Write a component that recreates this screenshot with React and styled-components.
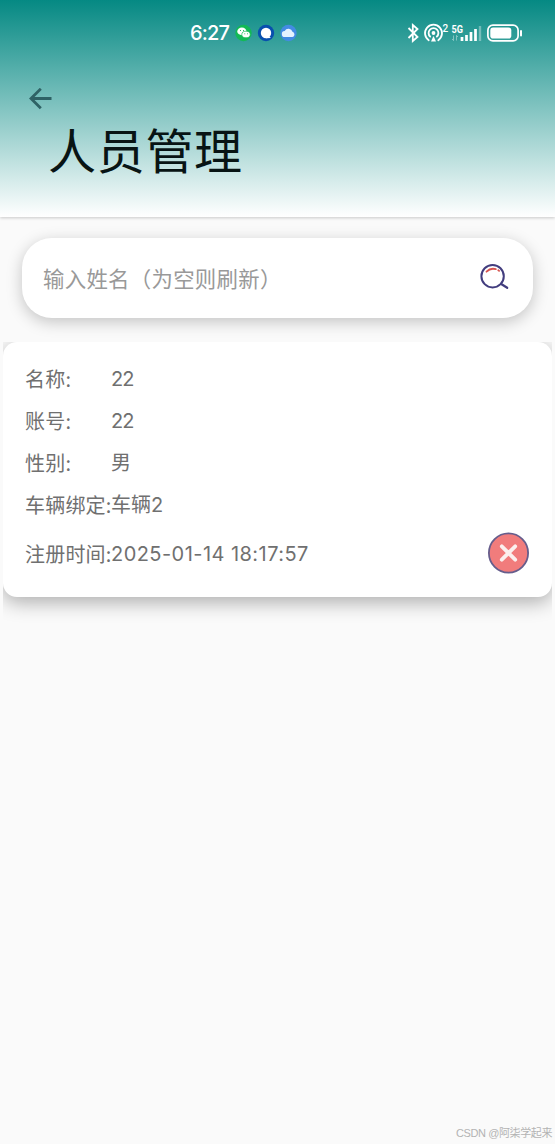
import React from 'react';
import styled, { createGlobalStyle } from 'styled-components';

const GlobalStyle = createGlobalStyle`
* {
  box-sizing: border-box;
}
body {
  margin: 0;
  background: #fafafa;
  font-family: 'Noto Sans CJK SC', sans-serif;
}
`;
const Container = styled.div`
display: flex;
flex-flow: column;
width: 100%;
height: 1144px;
overflow: hidden;
background: #fafafa;
`;
const Header = styled.header`
display: flex;
flex-flow: column;
flex: none;
height: 217px;
background: linear-gradient(to bottom, #058983, #ffffff);
box-shadow: 0 1px 3px rgba(0, 0, 0, .2);
`;
const StatusBar = styled.div`
display: flex;
align-items: center;
justify-content: space-between;
height: 66px;
padding: 0 32px 0 190px;
color: white;
`;
const StatusGroup = styled.div`
display: flex;
align-items: center;
`;
const Time = styled.span`
width: 45px;
font-family: Inter, sans-serif;
font-size: 20px;
font-weight: 500;
letter-spacing: -.8px;
line-height: 24px;
`;
const AppIcons = styled.svg`
width: 64px;
height: 18px;
`;
const SignalIcons = styled.svg`
width: 118px;
height: 24px;
font-family: Roboto, sans-serif;
`;
const BackButton = styled.button`
display: flex;
align-items: center;
justify-content: center;
width: 36px;
height: 36px;
margin: 16px 0 0 22px;
padding: 0;
border: 0;
background: none;
`;
const Title = styled.h1`
margin: -3px 0 0 48px;
font-size: 48px;
font-weight: 400;
line-height: 66px;
letter-spacing: .7px;
color: #081414;
`;
const SearchBar = styled.div`
display: flex;
flex: none;
align-items: center;
justify-content: space-between;
height: 80px;
margin: 21px 22px 0;
padding: 0 23px 0 21px;
border-radius: 30px;
background: white;
box-shadow: 0 4px 16px rgba(0, 0, 0, .22);
`;
const SearchInput = styled.input`
flex: 1;
min-width: 0;
padding: 0 0 2px;
border: 0;
outline: 0;
background: none;
font-family: inherit;
font-size: 21.4px;
font-weight: 400;
letter-spacing: .3px;
color: #666;
&::placeholder {
  color: #999;
  opacity: 1;
}
`;
const List = styled.div`
flex: 1;
margin: 24px 3px 0;
overflow: hidden;
`;
const Card = styled.div`
display: flex;
flex-flow: column;
height: 255px;
padding: 15px 23px 0 22px;
border-radius: 14px;
background: white;
box-shadow: 0 5px 20px rgba(0, 0, 0, .32);
`;
const Row = styled.div`
display: flex;
align-items: center;
height: ${props => props.$tall ? '56px' : '42px'};
font-size: 20px;
font-weight: 400;
line-height: 28px;
white-space: nowrap;
color: #707070;
`;
const Label = styled.span`
width: 86px;
padding-top: 1px;
letter-spacing: .2px;
`;
const Value = styled.span`
flex: 1;
padding-top: 2px;
font-family: Inter, 'Noto Sans CJK SC', sans-serif;
letter-spacing: ${props => props.$spacing || 0};
`;
const DeleteButton = styled.button`
display: flex;
padding: 0;
border: 0;
background: none;
`;
const Watermark = styled.footer`
align-self: flex-end;
height: 20px;
padding-right: 3px;
font-family: 'Liberation Sans', 'Noto Sans CJK SC', sans-serif;
font-size: 11px;
letter-spacing: -.4px;
line-height: 18px;
white-space: nowrap;
color: #b3b3b3;
`;

const fields = [
    { label: '名称:', value: '22', spacing: '-1px' },
    { label: '账号:', value: '22', spacing: '-1px' },
    { label: '性别:', value: '男' },
    { label: '车辆绑定:', value: '车辆2' },
];

const App = () => (<Container>
    <GlobalStyle />
    <Header>
        <StatusBar>
            <StatusGroup>
                <Time>6:27</Time>
                <AppIcons viewBox="0 0 64 18">
                    <circle cx="8.5" cy="9" r="8.2" fill="#12b955" />
                    <ellipse cx="6.9" cy="7.4" rx="4.6" ry="3.8" fill="#fff" />
                    <ellipse cx="11" cy="10.5" rx="4.2" ry="3.3" fill="#fff" stroke="#12b955" strokeWidth=".7" />
                    <path d="M5 6.5h.9M8 6.5h.9M9.4 9.8h.8M12 9.8h.8" stroke="#12b955" strokeWidth="1" />
                    <circle cx="31" cy="9" r="8.2" fill="#084fae" />
                    <circle cx="31" cy="9" r="5.2" fill="#fff" />
                    <path d="M32 11l4 3-5 .3z" fill="#fff" />
                    <circle cx="53.5" cy="9" r="8.2" fill="#438be2" />
                    <path d="M50 13a3 3 0 0 1-.3-6 4.2 4.2 0 0 1 7.8.8A2.7 2.7 0 0 1 57.5 13z" fill="#e5f2ff" />
                </AppIcons>
            </StatusGroup>
            <SignalIcons viewBox="0 0 118 24" fill="none" stroke="#fff">
                <path d="M3.5 7l9 9-4.7 4V4l4.7 4-9 9" strokeWidth="1.8" />
                <path d="M23.7 19.2a8.5 8.5 0 1 1 9.6 0M25.2 15.6a4.9 4.9 0 1 1 6.6 0" strokeWidth="1.8" strokeLinecap="round" />
                <circle cx="28.5" cy="12" r="1.9" fill="#fff" stroke="none" />
                <path d="M28.5 15l-2.5 5.5h5z" fill="#fff" stroke="none" />
                <text x="37.6" y="11" fontSize="10" fontWeight="500" fill="#fff" stroke="none">2</text>
                <text x="46.5" y="11.6" fontSize="10.5" fontWeight="700" textLength="11.5" lengthAdjust="spacingAndGlyphs" fill="#fff" stroke="none">5G</text>
                <path d="M48.5 14.5v5M48.5 19.5L47 18M51.5 19.5v-5M51.5 14.5l1.5 1.5" opacity=".4" />
                <path d="M57 20v-4M61.5 20v-6M66 20V11M70.5 20V8" strokeWidth="2.7" />
                <path d="M75 20V5" strokeWidth="2.4" opacity=".35" />
                <rect x="82.9" y="4.2" width="30.2" height="15.7" rx="5" strokeWidth="1.7" />
                <rect x="85.3" y="6.6" width="21" height="11" rx="2.8" fill="#fff" stroke="none" />
                <path d="M116 10v4.5" strokeWidth="2" strokeLinecap="round" />
            </SignalIcons>
        </StatusBar>
        <BackButton aria-label="返回">
            <svg width="24" height="24" viewBox="0 0 24 24" fill="none" stroke="#2e6265" strokeWidth="2.8">
                <path d="M23.5 10.5H3M12.8.8L3 10.5l9.8 9.8" />
            </svg>
        </BackButton>
        <Title>人员管理</Title>
    </Header>

    <SearchBar>
        <SearchInput placeholder="输入姓名（为空则刷新）" />
        <svg width="32" height="28" viewBox="0 0 32 28" fill="none" strokeLinecap="round">
            <circle cx="14.6" cy="12.2" r="11.2" stroke="#423d7e" strokeWidth="2" />
            <path d="M23.2 20l6 3.8" stroke="#423d7e" strokeWidth="2.2" />
            <path d="M8.5 7.7q4-4.1 9.3-2.5M20.3 6.3l.8.6" stroke="#d8544e" strokeWidth="1.8" />
        </svg>
    </SearchBar>

    <List>
        <Card>
            {fields.map(field => (
                <Row key={field.label}>
                    <Label>{field.label}</Label>
                    <Value $spacing={field.spacing}>{field.value}</Value>
                </Row>
            ))}
            <Row $tall>
                <Label>注册时间:</Label>
                <Value $spacing=".45px">2025-01-14 18:17:57</Value>
                <DeleteButton aria-label="删除">
                    <svg width="42" height="42" viewBox="0 0 42 42">
                        <circle cx="21.5" cy="21" r="19.6" fill="#f17c7c" stroke="#665d8c" strokeWidth="1.8" />
                        <path d="M14.8 14.3l13.4 13.4M28.2 14.3L14.8 27.7" stroke="#fbf0ee" strokeWidth="3.8" strokeLinecap="round" />
                    </svg>
                </DeleteButton>
            </Row>
        </Card>
    </List>
    <Watermark>CSDN @阿柒学起来</Watermark>
</Container>);

export default App;
